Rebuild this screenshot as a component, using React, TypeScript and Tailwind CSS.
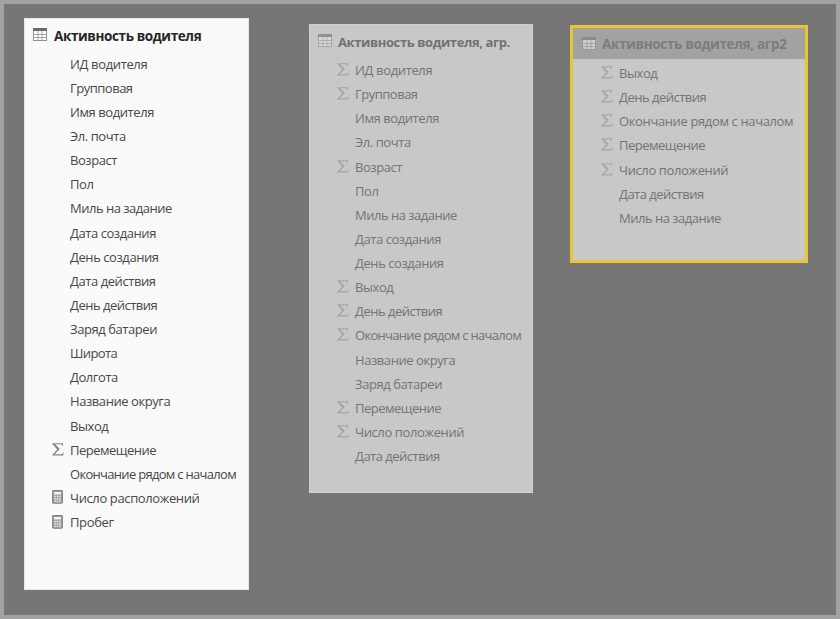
import React from "react";

type IconKind = "sum" | "calc";

interface Field {
  name: string;
  icon?: IconKind;
  tracking?: string;
}

function TableIcon({ head, line, fill }: { head: string; line: string; fill: string }) {
  return (
    <svg width="14" height="13" viewBox="0 0 14 13" className="-mt-0.5 block shrink-0">
      <rect x="0.5" y="0.5" width="13" height="12" fill={fill} stroke={line} />
      <path d="M1 6.5H13M1 9.5H13M5 3V12M9 3V12" stroke={line} strokeWidth="0.8" />
      <rect width="14" height="3" fill={head} />
    </svg>
  );
}

function SumIcon() {
  return (
    <svg width="12" height="13" viewBox="0 0 12 13" className="block">
      <path
        d="M0.3 0.2H11V3H10.4C10.2 1.7 9.8 1.2 8.5 1.2H3.1L7.7 6L2.7 11.2H9C10.4 11.2 10.9 10.6 11.3 9.6H11.8L11.2 12.6H0.2V12L5.3 6.5L0.3 0.9Z"
        fill="currentColor"
      />
    </svg>
  );
}

function CalcIcon() {
  return (
    <svg width="11" height="14" viewBox="0 0 11 14" className="block">
      <rect x="0.7" y="0.7" width="9.6" height="12.4" rx="0.8" fill="#a3a3a3" stroke="#808080" strokeWidth="1.2" />
      <rect x="2" y="2" width="7" height="2.4" fill="#f4f4f4" />
      <path d="M2.2 6.5H8.8M2.2 9H8.8M2.2 11.5H8.8" stroke="#e6e6e6" strokeWidth="1.3" strokeDasharray="1.6 0.9" />
    </svg>
  );
}

function FieldList({ fields, iconColor }: { fields: Field[]; iconColor: string }) {
  return (
    <ul>
      {fields.map((f) => (
        <li key={f.name} className="flex h-[24.13px] items-center">
          <span className={`-mt-px w-[18px] shrink-0 ${iconColor}`}>
            {f.icon === "sum" && <SumIcon />}
            {f.icon === "calc" && <CalcIcon />}
          </span>
          <span className={`whitespace-nowrap text-[13px] leading-[18px] ${f.tracking ?? "tracking-[-0.43px]"}`}>
            {f.name}
          </span>
        </li>
      ))}
    </ul>
  );
}

const source: Field[] = [
  { name: "ИД водителя", tracking: "tracking-[-0.36px]" },
  { name: "Групповая", tracking: "tracking-[-0.5px]" },
  { name: "Имя водителя" },
  { name: "Эл. почта" },
  { name: "Возраст" },
  { name: "Пол" },
  { name: "Миль на задание", tracking: "tracking-[-0.5px]" },
  { name: "Дата создания" },
  { name: "День создания" },
  { name: "Дата действия" },
  { name: "День действия", tracking: "tracking-[-0.5px]" },
  { name: "Заряд батареи" },
  { name: "Широта", tracking: "tracking-[-0.6px]" },
  { name: "Долгота" },
  { name: "Название округа" },
  { name: "Выход" },
  { name: "Перемещение", icon: "sum", tracking: "tracking-[-0.5px]" },
  { name: "Окончание рядом с началом", tracking: "tracking-[-0.7px]" },
  { name: "Число расположений", icon: "calc", tracking: "tracking-[-0.38px]" },
  { name: "Пробег", icon: "calc", tracking: "tracking-[-0.35px]" },
];

const aggregated: Field[] = [
  { name: "ИД водителя", icon: "sum", tracking: "tracking-[-0.36px]" },
  { name: "Групповая", icon: "sum", tracking: "tracking-[-0.5px]" },
  { name: "Имя водителя" },
  { name: "Эл. почта" },
  { name: "Возраст", icon: "sum" },
  { name: "Пол" },
  { name: "Миль на задание", tracking: "tracking-[-0.5px]" },
  { name: "Дата создания" },
  { name: "День создания" },
  { name: "Выход", icon: "sum" },
  { name: "День действия", icon: "sum", tracking: "tracking-[-0.5px]" },
  { name: "Окончание рядом с началом", icon: "sum", tracking: "tracking-[-0.7px]" },
  { name: "Название округа" },
  { name: "Заряд батареи" },
  { name: "Перемещение", icon: "sum", tracking: "tracking-[-0.5px]" },
  { name: "Число положений", icon: "sum", tracking: "tracking-[-0.38px]" },
  { name: "Дата действия", tracking: "tracking-[-0.5px]" },
];

const aggregated2: Field[] = [
  { name: "Выход", icon: "sum" },
  { name: "День действия", icon: "sum", tracking: "tracking-[-0.5px]" },
  { name: "Окончание рядом с началом", icon: "sum", tracking: "tracking-[-0.37px]" },
  { name: "Перемещение", icon: "sum", tracking: "tracking-[-0.5px]" },
  { name: "Число положений", icon: "sum", tracking: "tracking-[-0.38px]" },
  { name: "Дата действия", tracking: "tracking-[-0.5px]" },
  { name: "Миль на задание", tracking: "tracking-[-0.5px]" },
];

export default function App() {
  return (
    <main className="flex h-[619px] w-[840px] items-start overflow-hidden border-4 border-[#a2a2a2] bg-[#767676] font-['Open_Sans','Noto_Sans',sans-serif]">
      <section className="mt-[14px] ml-5 h-[572px] w-[225px] shrink-0 border border-[#e6e6e6] bg-[#fafafa] text-[#484848]">
        <header className="flex h-[32.6px] items-center pl-2 pt-px text-[#262626]">
          <TableIcon head="#6c6c6c" line="#949494" fill="#fff" />
          <h2 className="ml-[7px] whitespace-nowrap text-[13.5px] font-bold leading-5 tracking-[-0.38px]">
            Активность водителя
          </h2>
        </header>
        <div className="pl-[27px]">
          <FieldList fields={source} iconColor="text-[#858585]" />
        </div>
      </section>

      <section className="mt-5 ml-[60px] h-[469px] w-[224px] shrink-0 border border-[#d0d0d0] bg-[#c8c8c8] text-[#747474]">
        <header className="flex h-[33px] items-center pl-2 text-[#727272]">
          <TableIcon head="#929292" line="#a5a5a5" fill="#d7d7d7" />
          <h2 className="ml-[6px] whitespace-nowrap text-[13px] font-bold leading-5 tracking-[-0.4px]">
            Активность водителя, агр.
          </h2>
        </header>
        <div className="pl-[27px]">
          <FieldList fields={aggregated} iconColor="text-[#a4a4a4]" />
        </div>
      </section>

      <section className="mt-[21px] ml-[37px] h-[238px] w-[238px] shrink-0 border-[3px] border-[#e8c535] bg-[#c8c8c8] text-[#747474]">
        <header className="flex h-[31px] items-center bg-[#a2a2a2] pl-[9px] pt-px text-[#7c7c7c]">
          <TableIcon head="#898989" line="#999" fill="#cecece" />
          <h2 className="ml-[6px] whitespace-nowrap text-[13.5px] font-bold leading-5 tracking-[-0.33px]">
            Активность водителя, агр2
          </h2>
        </header>
        <div className="pl-[28px] pt-0.5">
          <FieldList fields={aggregated2} iconColor="text-[#a6a6a6]" />
        </div>
      </section>
    </main>
  );
}
